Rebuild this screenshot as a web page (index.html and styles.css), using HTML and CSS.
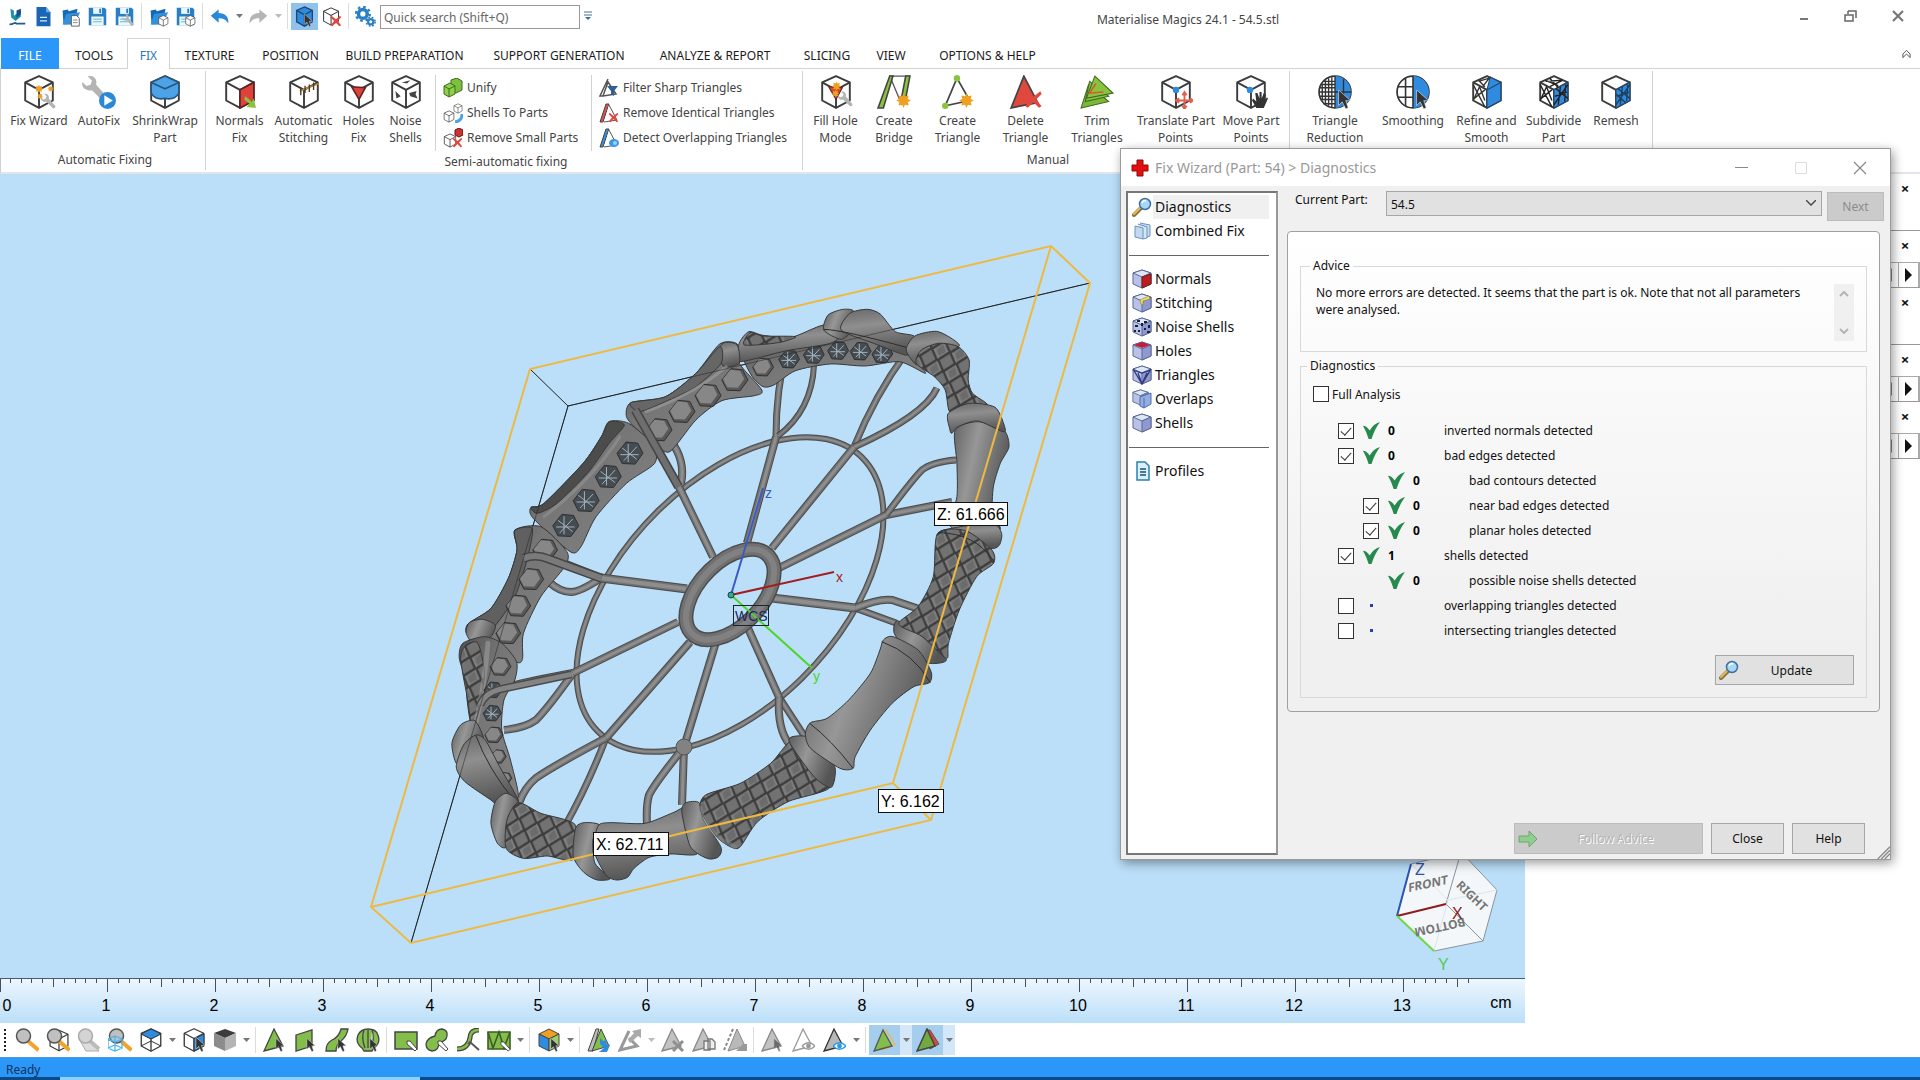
FILE: index.html
```html
<!DOCTYPE html>
<html lang="en">
<head>
    <meta charset="UTF-8">
    <meta name="viewport" content="width=device-width, initial-scale=1.0">
    <title>Materialise Magics 24.1 - 54.5.stl</title>
    <link rel="stylesheet" href="styles.css">
</head>
<body>
    <!-- Shared icon shapes -->
    <svg class="defs" aria-hidden="true">
        <symbol id="cube" viewBox="0 0 32 32">
            <path d="M16 1 29 7V24L16 31 3 24V7Z" fill="#fff" stroke="#3c3c3c" stroke-width="1.8" stroke-linejoin="round"/>
            <path d="M3 7 16 14 29 7M16 14V31" fill="none" stroke="#3c3c3c" stroke-width="1.8"/>
        </symbol>
        <symbol id="cursor" viewBox="0 0 12 16">
            <path d="M1 0V13L4 10 7 16 9 15 7 9H11Z" fill="#333" stroke="#eee" stroke-width=".5"/>
        </symbol>
        <symbol id="cross" viewBox="0 0 14 14">
            <path d="M2 1 7 5 12 1 13 3 9 7 13 12 11 13 7 9 3 13 1 12 5 7 1 3Z" fill="#e0483e"/>
        </symbol>
        <symbol id="wrench" viewBox="0 0 20 20">
            <path d="M1 5 4 8 7 7 8 4 5 1C9 0 12 3 11 7L19 16C20 18 18 20 16 19L8 11C4 12 0 9 1 5Z" fill="#b4b4b4"/>
        </symbol>
        <symbol id="star" viewBox="0 0 16 16">
            <path d="M8 0 9.500 3.500 13.500 2.500 12.500 6.500 16 8 12.500 9.500 13.500 13.500 9.500 12.500 8 16 6.500 12.500 2.500 13.500 3.500 9.500 0 8 3.500 6.500 2.500 2.500 6.500 3.500Z" fill="#f0a020"/>
        </symbol>
        <symbol id="floppy" viewBox="0 0 24 24">
            <path d="M2 2H20L22 4V22H2Z" fill="#2a7fc4"/>
            <path d="M7 2H17V9H7Z" fill="#e9f6fb"/><path d="M14 3H16V8H14Z" fill="#2a7fc4"/>
            <path d="M5 12H19V22H5Z" fill="#e9f9f8"/><path d="M7 15H17M7 18H17" stroke="#66a8c8"/>
        </symbol>
        <symbol id="folder" viewBox="0 0 24 24">
            <path d="M3 5 9 4 10 6 20 3 19 9 15 21H4Z" fill="#1769b5"/>
            <path d="M3 21 7 9 23 7 17 20Z" fill="#3391dc"/>
        </symbol>
        <symbol id="lens" viewBox="0 0 24 24">
            <path d="M13 13 22 21" stroke="#f2a32c" stroke-width="4" stroke-linecap="square"/>
            <circle cx="8.500" cy="8" r="7" fill="#c0c0c0" stroke="#555" stroke-width="1.500"/>
        </symbol>
        <symbol id="pencil" viewBox="0 0 12 12">
            <path d="M1 1 4 1 11 9 9 11 1 4Z" fill="#fff" stroke="#444"/>
        </symbol>
        <symbol id="gtri" viewBox="0 0 24 24">
            <path d="M11 1 20 18 1 23Z" fill="#c2c2c2" stroke="#888" stroke-width="1.300"/>
        </symbol>
        <symbol id="eye" viewBox="0 0 14 8">
            <path d="M0 4Q7 -3 14 4 7 11 0 4Z" fill="#fff" stroke="currentColor" stroke-width="1.400"/><circle cx="7" cy="4" r="2.600" fill="currentColor"/>
        </symbol>
        <symbol id="box" viewBox="0 0 20 20">
            <path d="M10 1 19 4V15L10 19 1 15V4Z" fill="#b9c1e8" stroke="#5a6a94"/>
            <path d="M1 4 10 1 19 4 10 8Z" fill="#dce6f5" stroke="#5a6a94"/>
            <path d="M10 8V19L19 15V4Z" fill="#9098d0" stroke="#5a6a94"/>
        </symbol>
        <symbol id="magnifier" viewBox="0 0 20 20">
            <path d="M2 18 9 11" stroke="#8a7440" stroke-width="4" stroke-linecap="round"/>
            <path d="M2 17 8 11" stroke="#e6b85c" stroke-width="2" stroke-linecap="round"/>
            <circle cx="13" cy="7" r="5.500" fill="#a9d8f4" stroke="#3e6fa3" stroke-width="1.500"/>
            <path d="M10 6Q11 3 14 4" stroke="#fff" stroke-width="1.500" fill="none"/>
        </symbol>
        <symbol id="tick" viewBox="0 0 18 18">
            <path d="M0 4Q4 4 7 9 11 2 18 0 12 8 9 18L6 18Q4 11 0 4Z" fill="#27894e"/>
        </symbol>
        <symbol id="caret" viewBox="0 0 8 5"><path d="M0 0H7L3.500 4Z" fill="currentColor"/></symbol>
    </svg>

    <header class="titlebar">
        <div class="quick">
            <button aria-label="Magics"><svg viewBox="0 0 24 24"><path d="M5 3 9 5V11L17 5V12L11 17 6 13Z" fill="#1b8fae"/><path d="M12 5 17 3V9L12 14Z" fill="#164f8c"/><path d="M4 21C10 21 9 18 12 20H22" stroke="#245b8c" stroke-width="2" fill="none"/></svg></button>
            <button aria-label="New"><svg viewBox="0 0 24 24"><path d="M4 1H15L20 7V23H4Z" fill="#1b66b4"/><path d="M15 1V7H20" fill="#6db2ea"/><path d="M8 13H16M8 17H16" stroke="#d8ecfa" stroke-width="1.500"/></svg></button>
            <button aria-label="Open"><svg viewBox="0 0 24 24"><use href="#folder"/><path d="M13 11H19L22 14V23H13Z" fill="#fff" stroke="#555"/><path d="M15 16H20M15 19H20" stroke="#777"/></svg></button>
            <button aria-label="Save"><svg viewBox="0 0 24 24"><use href="#floppy"/></svg></button>
            <button aria-label="Save as"><svg viewBox="0 0 24 24"><use href="#floppy"/><use href="#wrench" x="9" y="9" width="14" height="14"/></svg></button>
            <i class="sep"></i>
            <button aria-label="Import part"><svg viewBox="0 0 24 24"><use href="#folder"/><use href="#cube" x="11" y="10" width="13" height="14"/></svg></button>
            <button aria-label="Save part"><svg viewBox="0 0 24 24"><use href="#floppy"/><use href="#cube" x="11" y="10" width="13" height="14"/></svg></button>
            <i class="sep"></i>
            <button aria-label="Undo"><svg viewBox="0 0 24 24"><path d="M2 11 11 4V8C18 8 23 12 22 20 19 15 16 14 11 14V19Z" fill="#2a88d8"/></svg></button>
            <svg class="caret"><use href="#caret"/></svg>
            <button aria-label="Redo"><svg viewBox="0 0 24 24"><path d="M22 11 13 4V8C6 8 1 12 2 20 5 15 8 14 13 14V19Z" fill="#b5b5b5"/></svg></button>
            <svg class="caret off"><use href="#caret"/></svg>
            <i class="sep"></i>
            <button class="on" aria-label="Select"><svg viewBox="0 0 24 24"><path d="M12 1 21 5V18L12 23 3 18V5Z" fill="#2f8be0" stroke="#22486c" stroke-width="1.500"/><path d="M3 5 12 10 21 5M12 10V23" fill="none" stroke="#22486c" stroke-width="1.500"/><use href="#cursor" x="11" y="9" width="11" height="15"/></svg></button>
            <button aria-label="Unselect"><svg viewBox="0 0 24 24"><use href="#cube" x="1" y="1" width="21" height="22"/><use href="#cross" x="10" y="10" width="14" height="14"/></svg></button>
            <i class="sep"></i>
            <button aria-label="Settings"><svg viewBox="0 0 24 24"><circle cx="9" cy="9" r="5" fill="none" stroke="#2a7fc4" stroke-width="4"/><circle cx="9" cy="9" r="8" fill="none" stroke="#2a7fc4" stroke-width="2.500" stroke-dasharray="3 3.300"/><circle cx="18" cy="18" r="3" fill="none" stroke="#2a7fc4" stroke-width="2.500"/><circle cx="18" cy="18" r="5" fill="none" stroke="#2a7fc4" stroke-width="1.800" stroke-dasharray="2 2"/></svg></button>
            <input class="search" type="text" aria-label="Quick search" placeholder="Quick search (Shift+Q)">
            <svg class="more" viewBox="0 0 8 10"><path d="M0 1H8M0 4H8" stroke="#4a7090"/><path d="M1 6H7L4 9Z" fill="#2a6fa4"/></svg>
        </div>
        <h1>Materialise Magics 24.1 - 54.5.stl</h1>
        <div class="wincontrols">
            <button aria-label="Minimize"><svg viewBox="0 0 16 16"><path d="M4 11H12" stroke="#777" stroke-width="2"/></svg></button>
            <button aria-label="Restore"><svg viewBox="0 0 16 16"><path d="M5 3H13V10M2 7H10V13H2Z M5 6V3" fill="none" stroke="#666" stroke-width="1.500"/></svg></button>
            <button aria-label="Close"><svg viewBox="0 0 16 16"><path d="M3 3 13 13M13 3 3 13" stroke="#777" stroke-width="2.200"/></svg></button>
        </div>
    </header>

    <nav class="tabs">
        <button class="file">FILE</button>
        <button>TOOLS</button>
        <button class="active">FIX</button>
        <button>TEXTURE</button>
        <button>POSITION</button>
        <button>BUILD PREPARATION</button>
        <button>SUPPORT GENERATION</button>
        <button>ANALYZE &amp; REPORT</button>
        <button>SLICING</button>
        <button>VIEW</button>
        <button>OPTIONS &amp; HELP</button>
        <svg class="collapse" viewBox="0 0 10 10"><path d="M1 5 5 1 9 5M1 9 5 5 9 9M1 5V9M9 5V9" fill="none" stroke="#444"/></svg>
    </nav>

    <section class="ribbon">
        <div class="group">
            <div class="tools auto">
                <button class="tool"><svg viewBox="0 0 32 32"><use href="#cube"/><use href="#star" x="12" y="9" width="8" height="8"/><use href="#star" x="24" y="10" width="6" height="6"/><use href="#star" x="14" y="17" width="6" height="6"/><use href="#wrench" x="17" y="17" width="15" height="15"/></svg>Fix Wizard</button>
                <button class="tool"><svg viewBox="0 0 32 32"><use href="#wrench" x="-1" y="0" width="26" height="26"/><circle cx="24" cy="24" r="8" fill="#2a88d8"/><path d="M21 19 29 24 21 29Z" fill="#fff"/></svg>AutoFix</button>
                <button class="tool"><svg viewBox="0 0 32 32"><use href="#cube"/><path d="M16 1 29 7V17Q25 24 16 22 7 24 3 17V7Z" fill="#4da3e8" stroke="#27577d" stroke-width="1.500"/><path d="M3 7 16 13 29 7" fill="none" stroke="#27577d" stroke-width="1.500"/></svg>ShrinkWrap<br>Part</button>
            </div>
            <span class="name">Automatic Fixing</span>
        </div>
        <div class="group">
            <div class="row">
                <div class="tools semi">
                    <button class="tool"><svg viewBox="0 0 32 32"><use href="#cube"/><path d="M16 14 29 7V24L16 31Z" fill="#e0423a" stroke="#5c2522" stroke-width="1.500"/><path d="M21 20 27 25 29 22 31 31 22 30 25 27 20 23Z" fill="#8ac43f"/></svg>Normals<br>Fix</button>
                    <button class="tool"><svg viewBox="0 0 32 32"><use href="#cube"/><path d="M12 15 30 8" stroke="#b98a3a" stroke-width="1.500"/><path d="M13 12V19M17 10V17M21 9V16M25 7V14" stroke="#4e3c20" stroke-width="1.300"/></svg>Automatic<br>Stitching</button>
                    <button class="tool"><svg viewBox="0 0 32 32"><use href="#cube"/><path d="M9 11 22 12 16 23Z" fill="#e0423a" stroke="#5c2522" stroke-width="1.500"/></svg>Holes<br>Fix</button>
                    <button class="tool"><svg viewBox="0 0 32 32"><use href="#cube"/><path d="M12 7 20 5 17 8Z M6 15 11 20 7 22Z M19 17 26 15 25 18 27 22 20 20Z" fill="#444"/></svg>Noise<br>Shells</button>
                </div>
                <div class="stack first">
                    <button><svg viewBox="0 0 20 20"><path d="M8 2 14 0 19 3V12L13 15 8 12Z" fill="#7cc040" stroke="#3f6a20"/><path d="M1 8 7 5 12 8V16L6 19 1 16Z" fill="#8ed04a" stroke="#3f6a20"/><path d="M1 8 6 11 12 8M6 11V19" fill="none" stroke="#3f6a20"/></svg>Unify</button>
                    <button><svg viewBox="0 0 20 20"><use href="#cube" x="10" y="0" width="10" height="11"/><use href="#cube" x="0" y="7" width="12" height="13"/><path d="M19 11Q19 18 12 19" stroke="#4da3e8" stroke-width="3" fill="none"/></svg>Shells To Parts</button>
                    <button><svg viewBox="0 0 20 20"><use href="#cube" x="0" y="5" width="14" height="15"/><path d="M12 2 16 0 20 2V7L16 9 12 7Z" fill="#c33" stroke="#611"/><use href="#cross" x="9" y="9" width="11" height="11"/></svg>Remove Small Parts</button>
                </div>
                <div class="stack">
                    <button><svg viewBox="0 0 20 20"><path d="M9 1 1 18 4 18 9 4 17 16 4 18" fill="none" stroke="#555" stroke-width="1.500"/><path d="M8 8H19L15 13V18L12 16V13Z" fill="#2d5f94"/></svg>Filter Sharp Triangles</button>
                    <button><svg viewBox="0 0 20 20"><path d="M7 1 10 1 4 19 1 19Z" fill="#d9534a" stroke="#444"/><path d="M10 2 18 17 5 19" fill="#fff" stroke="#555"/><use href="#cross" x="9" y="9" width="11" height="11"/></svg>Remove Identical Triangles</button>
                    <button><svg viewBox="0 0 20 20"><path d="M7 1 10 1 4 19 1 19Z" fill="#3a8fd0" stroke="#444"/><path d="M10 2 18 17 5 19" fill="#fff" stroke="#555"/><ellipse cx="15" cy="15" rx="5" ry="4" fill="#3b98e6"/><circle cx="16" cy="15" r="2" fill="#9fd0f8"/></svg>Detect Overlapping Triangles</button>
                </div>
            </div>
            <span class="name">Semi-automatic fixing</span>
        </div>
        <div class="group">
            <div class="tools manual">
                <button class="tool"><svg viewBox="0 0 32 32"><use href="#cube"/><path d="M9 11 22 12 16 23Z" fill="#d44a2e" stroke="#5c2522"/><use href="#star" x="12" y="6" width="9" height="9"/><use href="#star" x="12" y="14" width="7" height="7"/><use href="#wrench" x="17" y="15" width="15" height="15"/></svg>Fill Hole<br>Mode</button>
                <button class="tool"><svg viewBox="0 0 32 32"><path d="M12 1H30L23 27Z" fill="#fff" stroke="#555" stroke-width="1.200"/><path d="M12 1H15L6 31H1Z M27 1H31L27 22H23Z" fill="#8ac43f" stroke="#444" stroke-width="1.500"/><use href="#star" x="18" y="17" width="14" height="14"/></svg>Create<br>Bridge</button>
                <button class="tool"><svg viewBox="0 0 32 32"><path d="M15 3 27 24 4 29Z" fill="#fff" stroke="#444" stroke-width="1.600"/><circle cx="15" cy="3" r="3" fill="#8ac43f"/><circle cx="4" cy="29" r="3" fill="#8ac43f"/><use href="#star" x="17" y="17" width="14" height="14"/></svg>Create<br>Triangle</button>
                <button class="tool"><svg viewBox="0 0 32 32"><path d="M14 1 27 26 2 31Z" fill="#e0483e" stroke="#444" stroke-width="1.600"/><use href="#cross" x="14" y="14" width="18" height="18"/></svg>Delete<br>Triangle</button>
                <button class="tool"><svg viewBox="0 0 32 32"><path d="M8 9 27 25 1 31Z" fill="#7ab838" stroke="#3f6a20"/><path d="M9 6 27 20 5 25Z" fill="#8ac43f" stroke="#3f6a20"/><path d="M14 1 31 17 6 22Z" fill="#8ac43f" stroke="#3f6a20"/><path d="M15 8 9 17 22 16" fill="none" stroke="#d06030" stroke-width="1.500"/></svg>Trim<br>Triangles</button>
                <button class="tool"><svg viewBox="0 0 32 32"><use href="#cube"/><circle cx="16" cy="14" r="3" fill="#2f8be0"/><path d="M24 17V31M17 24H31M22 19 24 16 26 19M22 29 24 32 26 29M19 22 16 24 19 26M29 22 32 24 29 26" fill="none" stroke="#e0604e" stroke-width="1.800"/></svg>Translate Part<br>Points</button>
                <button class="tool"><svg viewBox="0 0 32 32"><use href="#cube"/><circle cx="15" cy="14" r="3" fill="#2f8be0"/><path d="M21 31 17 24 18 22 21 25 20 17 22 17 24 22 24 16 26 16 26 22 28 17 30 18 29 24 31 21 32 22 28 31Z" fill="#333"/></svg>Move Part<br>Points</button>
            </div>
            <span class="name">Manual</span>
        </div>
        <div class="group">
            <div class="tools mesh">
                <button class="tool"><svg viewBox="0 0 32 32"><circle cx="16" cy="16" r="15" fill="#fff" stroke="#333" stroke-width="1.600"/><path d="M16 1A15 15 0 0 1 16 31Z" fill="#2f8be0"/><path d="M4 8V24M7 5V27M10 3V29M13 2V30M16 1V31M24 4V28M5 6H16M3 9H16M2 12H16M1 16H31M2 20H16M3 23H16M5 27H16" stroke="#333" stroke-width="1.300"/><use href="#cursor" x="18" y="14" width="14" height="18"/></svg>Triangle<br>Reduction</button>
                <button class="tool"><svg viewBox="0 0 32 32"><circle cx="16" cy="16" r="15" fill="#fff" stroke="#333" stroke-width="1.600"/><path d="M16 1A15 15 0 0 1 16 31Z" fill="#2f8be0"/><path d="M9 3V29M16 1V31M2 11H16M2 21H16" stroke="#333" stroke-width="1.500"/><use href="#cursor" x="18" y="14" width="14" height="18"/></svg>Smoothing</button>
                <button class="tool"><svg viewBox="0 0 32 32"><use href="#cube"/><path d="M16 14 29 7V24L16 31Z M16 14 19 2 29 7Z" fill="#2f8be0" stroke="#22486c"/><path d="M3 9 14 30M4 22 14 14M3 24 9 11 14 24M8 6 18 3 12 11M8 5 14 11" fill="none" stroke="#333" stroke-width="1.300"/></svg>Refine and<br>Smooth</button>
                <button class="tool"><svg viewBox="0 0 32 32"><use href="#cube"/><path d="M16 14 29 7V24L16 31Z" fill="#2f8be0" stroke="#22486c"/><path d="M3 9 14 30M4 22 14 14M3 24 9 11 14 24M8 6 24 5 12 11M8 5 20 10M16 28 29 9M18 13 29 22M17 20 28 16M22 11 20 28M27 9 26 25M12 3 20 12" fill="none" stroke="#222" stroke-width="1.300"/></svg>Subdivide<br>Part</button>
                <button class="tool"><svg viewBox="0 0 32 32"><use href="#cube"/><path d="M16 14 29 7V24L16 31Z" fill="#2f8be0" stroke="#22486c"/><path d="M16 28 29 9M18 13 29 22M17 20 28 16M22 11 20 28M27 9 26 25M16 18 25 26" fill="none" stroke="#1d3f60" stroke-width="1.300"/></svg>Remesh</button>
            </div>
        </div>
    </section>

    <main class="work">
        <div class="viewport">
            <svg class="scene" viewBox="0 174 1525 804" preserveAspectRatio="xMinYMin slice">
                <defs>
                    <linearGradient id="bone" x1="0" y1="0" x2="1" y2=".4"><stop offset="0" stop-color="#5c5c5c"/><stop offset=".45" stop-color="#979797"/><stop offset="1" stop-color="#555"/></linearGradient>
                    <linearGradient id="boneV" x1="0" y1="0" x2=".2" y2="1"><stop offset="0" stop-color="#686868"/><stop offset=".4" stop-color="#8f8f8f"/><stop offset="1" stop-color="#565656"/></linearGradient>
                    <linearGradient id="band" x1="0" y1="0" x2="1" y2="1"><stop offset="0" stop-color="#505050"/><stop offset=".4" stop-color="#767676"/><stop offset="1" stop-color="#828282"/></linearGradient>
                    <pattern id="lattice" width="44" height="58" patternUnits="userSpaceOnUse" patternTransform="rotate(16)">
                        <rect width="44" height="58" fill="#3c3c3c"/>
                        <path d="M22 4 39 29 22 54 5 29Z" fill="#7c7c7c"/>
                        <path d="M22 9 34 29 22 46 12 29Z" fill="#6b6b6b"/>
                        <path d="M22 4 39 29M5 29 22 54" stroke="#9c9c9c" stroke-width="2"/>
                        <path d="M0 -25 17 0 0 25ZM44 -25 27 0 44 25ZM0 33 17 58 0 83ZM44 33 27 58 44 83Z" fill="#727272"/>
                    </pattern>
                </defs>

                <!-- far edges of the bounding box -->
                <path class="edge" d="M530 369 568 406 1090 283M568 406 411 943"/>

                <!-- hub, middle ring and spokes; the ring is a circle in the part's XZ plane -->
                <g transform="matrix(8.330 -1.968 -2.578 8.720 730 594.500)" fill="none">
                    <circle class="ring dark" r="17.600"/><circle class="ring mid" r="17.600"/><circle class="ring glint" r="17.600"/>
                </g>
                <g id="spokes"></g>
                <g transform="matrix(8.330 -1.968 -2.578 8.720 730 594.500)" fill="none">
                    <circle class="hub dark" r="5.050"/><circle class="hub mid" r="5.050"/><circle class="hub light" r="5.050"/>
                </g>
                <g id="rimTop" transform="matrix(.43367 0 0 .33333 440 230)"></g>
                <g id="rimBottom" transform="matrix(.43367 0 0 .33333 350 500)"></g>

                <path class="edge faint" d="M568 406 1090 283M568 406 411 943"/>
                <path class="frame" d="M371 907 530 369 1051 246 1090 283 931 820 411 943ZL893 783 931 820M893 783 1051 246"/>

                <!-- axes -->
                <path d="M731 595 763 488" stroke="#3a5cc0" stroke-width="2"/>
                <path d="M731 595 834 572" stroke="#a31c20" stroke-width="2"/>
                <path d="M731 595 812 668" stroke="#4fd32a" stroke-width="2"/>
                <circle cx="731" cy="595" r="3" fill="#3a9" stroke="#143"/>
                <text class="axis" x="765" y="498" fill="#3a5cc0">z</text>
                <text class="axis" x="836" y="582" fill="#a31c20">x</text>
                <text class="axis" x="813" y="681" fill="#4fd32a">y</text>
                <rect x="733.500" y="605.500" width="35" height="20" fill="none" stroke="#1c2430"/>
                <text class="wcs" x="735" y="621">WCS</text>

                <g class="dims">
                    <rect x="593.500" y="832.500" width="75" height="23"/><text x="596" y="850">X: 62.711</text>
                    <rect x="878.500" y="789.500" width="65" height="23"/><text x="881" y="807">Y: 6.162</text>
                    <rect x="934.500" y="502.500" width="73" height="23"/><text x="937" y="520">Z: 61.666</text>
                </g>

                <!-- navigation cube -->
                <path d="M1397 916 1411 864 1461 852 1497 890 1483 941 1434 951Z" fill="#f4f7fa" stroke="#8a94a0"/>
                <path d="M1461 852 1446 904 1483 941" fill="none" stroke="#8a94a0"/>
                <path d="M1411 864 1448 900 1497 890M1448 900 1434 951" fill="none" stroke="#dde3ea"/>
                <path d="M1397 916 1411 864" stroke="#2c55b0" stroke-width="2"/>
                <path d="M1397 916 1446 904" stroke="#8c1c1c" stroke-width="2"/>
                <path d="M1397 916 1434 951" stroke="#6fd84a" stroke-width="2"/>
                <g class="face">
                    <text transform="translate(1428 888) rotate(-12) skewX(-12)">FRONT</text>
                    <text transform="translate(1469 899) rotate(44)">RIGHT</text>
                    <text transform="translate(1439 923) rotate(168)">BOTTOM</text>
                </g>
                <text class="nav-axis" x="1415" y="875" fill="#2c55b0">Z</text>
                <text class="nav-axis" x="1452" y="919" fill="#8c1c1c">X</text>
                <text class="nav-axis" x="1438" y="970" fill="#55c955">Y</text>
            </svg>
            <svg class="ruler" id="ruler" height="45"></svg>
        </div>

        <aside class="dock">
            <div class="pane"><button class="x" aria-label="Close pane">×</button></div>
            <div class="pane"><button class="x" aria-label="Close pane">×</button><div class="scroll"><i class="left"></i><i class="right"></i></div></div>
            <div class="pane"><button class="x" aria-label="Close pane">×</button></div>
            <div class="pane"><button class="x" aria-label="Close pane">×</button><div class="scroll"><i class="left"></i><i class="right"></i></div></div>
            <div class="pane"><button class="x" aria-label="Close pane">×</button><div class="scroll"><i class="left"></i><i class="right"></i></div></div>
        </aside>
    </main>

    <footer class="toolbar">
        <i class="grip"></i>
        <button aria-label="Zoom"><svg viewBox="0 0 24 24"><use href="#lens"/></svg></button>
        <button aria-label="Zoom to part"><svg viewBox="0 0 24 24"><use href="#cube" x="2" y="1" width="22" height="23"/><use href="#lens"/></svg></button>
        <button aria-label="Zoom previous"><svg viewBox="0 0 24 24"><path d="M2 11 9 23H22L13 12" fill="#ddd" stroke="#aaa"/><path d="M13 13 22 21" stroke="#bbb" stroke-width="4"/><circle cx="8.500" cy="8" r="7" fill="#d4d4d4" stroke="#aaa" stroke-width="1.500"/></svg></button>
        <button aria-label="Zoom platform"><svg viewBox="0 0 24 24"><use href="#lens"/><path d="M7 8 14 11V20L7 23 0 20V11ZM0 11 7 14 14 11M7 14V23M0 20 7 17 14 20M7 8V17" fill="none" stroke="#4bb5f0" stroke-width="1.300"/></svg></button>
        <button aria-label="Views"><svg viewBox="0 0 24 24"><use href="#cube"/><path d="M2 6 12 1 22 6 12 11Z" fill="#2f8be0" stroke="#333"/><path d="M2 18 12 13 22 18" fill="none" stroke="#333"/></svg></button>
        <svg class="caret"><use href="#caret"/></svg>
        <button aria-label="Pick view"><svg viewBox="0 0 24 24"><use href="#cube"/><path d="M12 11 22 6V18L12 23Z" fill="#2f8be0" stroke="#333"/><use href="#cursor" x="13" y="9" width="11" height="15"/></svg></button>
        <button aria-label="Shading"><svg viewBox="0 0 24 24"><path d="M1 5 12 1 23 5 12 10Z" fill="#3c3c3c"/><path d="M1 5 12 10V23L1 18Z" fill="#8c8c8c"/><path d="M23 5 12 10V23L23 18Z" fill="#b4b4b4"/></svg></button>
        <svg class="caret"><use href="#caret"/></svg>
        <i class="sep"></i>
        <button aria-label="Mark triangle"><svg viewBox="0 0 24 24"><path d="M11 1 20 18 1 23Z" fill="#84be4a" stroke="#444" stroke-width="1.300"/><use href="#cursor" x="12" y="10" width="10" height="14"/></svg></button>
        <button aria-label="Mark plane"><svg viewBox="0 0 24 24"><path d="M2 7 18 2V18L2 23Z" fill="#84be4a" stroke="#444" stroke-width="1.300"/><use href="#cursor" x="12" y="10" width="10" height="14"/></svg></button>
        <button aria-label="Mark surface"><svg viewBox="0 0 24 24"><path d="M16 1H23Q22 8 16 13 11 17 11 23H1Q1 15 7 12 14 9 16 1Z" fill="#84be4a" stroke="#444" stroke-width="1.300"/><use href="#cursor" x="12" y="10" width="10" height="14"/></svg></button>
        <button aria-label="Mark shell"><svg viewBox="0 0 24 24"><path d="M6 20Q-1 15 2 7 5 1 12 1 20 1 22 7 25 15 18 20L16 23H8ZM9 20Q5 10 8 2M12 20V2M15 20Q19 10 16 2" fill="#84be4a" stroke="#444" stroke-width="1.300"/><use href="#cursor" x="13" y="10" width="10" height="14"/></svg></button>
        <i class="sep"></i>
        <button aria-label="Window mark"><svg viewBox="0 0 24 24"><path d="M1 4H23V21H1Z" fill="#84be4a" stroke="#444" stroke-width="1.500"/><use href="#pencil" x="12" y="12" width="12" height="12"/></svg></button>
        <button aria-label="Brush mark"><svg viewBox="0 0 24 24"><path d="M10 8Q11 1 17 1 23 2 22 8 21 14 14 14 14 23 7 23 1 22 1 16 2 10 10 8Z" fill="#84be4a" stroke="#444" stroke-width="1.300"/><use href="#pencil" x="12" y="12" width="12" height="12"/></svg></button>
        <button aria-label="Curve mark"><svg viewBox="0 0 24 24"><path d="M23 2Q14 2 14 10 12 21 1 21" fill="none" stroke="#444" stroke-width="5"/><path d="M23 2Q14 2 14 10 12 21 1 21" fill="none" stroke="#84be4a" stroke-width="2.500"/><path d="M12 16 14 14 23 22" stroke="#555" stroke-width="2" fill="none"/></svg></button>
        <button aria-label="Mark in window"><svg viewBox="0 0 24 24"><path d="M1 4H23V21H1Z" fill="#84be4a" stroke="#3d5c26" stroke-width="1.600"/><path d="M1 4 6 20 12 4 17 20 23 4" fill="none" stroke="#3d5c26" stroke-width="1.600"/><use href="#pencil" x="13" y="13" width="11" height="11"/></svg></button>
        <svg class="caret"><use href="#caret"/></svg>
        <i class="sep"></i>
        <button aria-label="Color cube"><svg viewBox="0 0 24 24"><path d="M2 6 12 1 22 6 12 11Z" fill="#f0a020" stroke="#444"/><path d="M2 6 12 11V23L2 18Z" fill="#2f8be0" stroke="#444"/><path d="M22 6 12 11V23L22 18Z" fill="#9ccf6c" stroke="#444"/><use href="#cursor" x="13" y="10" width="10" height="14"/></svg></button>
        <svg class="caret"><use href="#caret"/></svg>
        <i class="sep"></i>
        <button aria-label="Invert marks"><svg viewBox="0 0 24 24"><path d="M9 1H12L6 23H1Z" fill="#bbb" stroke="#444"/><path d="M14 1 22 18 5 23Z" fill="#84be4a" stroke="#444"/><path d="M13 16V10L16 13 20 12 19 16 23 17 20 24 12 24 17 20Z" fill="#2f8be0"/></svg></button>
        <button aria-label="Expand marks"><svg viewBox="0 0 24 24"><path d="M11 3 2 22 19 18 11 10" fill="none" stroke="#999" stroke-width="3"/><path d="M10 12 16 5 14 3 23 1V10L20 8 12 15Z" fill="#aaa"/></svg></button>
        <svg class="caret off"><use href="#caret"/></svg>
        <button aria-label="Delete marked"><svg viewBox="0 0 24 24"><use href="#gtri"/><path d="M12 13 22 23M22 13 12 23" stroke="#909090" stroke-width="3"/></svg></button>
        <button aria-label="Copy marked"><svg viewBox="0 0 24 24"><use href="#gtri"/><path d="M12 13H18V22H12Z M16 11H20L23 14V21H16Z" fill="#eee" stroke="#777" stroke-width="1.300"/></svg></button>
        <button aria-label="Separate marked"><svg viewBox="0 0 24 24"><path d="M10 1 1 22" stroke="#888" stroke-width="2" stroke-dasharray="3 2"/><path d="M14 1 22 18 5 23Z" fill="#b9b9b9" stroke="#888"/><path d="M13 23 20 16H24V23Z" fill="#999"/></svg></button>
        <i class="sep"></i>
        <button aria-label="Pick marked"><svg viewBox="0 0 24 24"><use href="#gtri"/><g opacity=".6"><use href="#cursor" x="12" y="10" width="10" height="14"/></g></svg></button>
        <button aria-label="Hide marked"><svg class="grey" viewBox="0 0 24 24"><path d="M11 1 20 18 1 23Z" fill="#fff" stroke="#999" stroke-width="1.300"/><use href="#eye" x="10" y="14" width="13" height="8"/></svg></button>
        <button aria-label="Show marked"><svg class="blue" viewBox="0 0 24 24"><path d="M11 1 20 18 1 23Z" fill="#b8b8b8" stroke="#333" stroke-width="1.300"/><use href="#eye" x="10" y="14" width="13" height="8"/></svg></button>
        <svg class="caret"><use href="#caret"/></svg>
        <i class="sep"></i>
        <button class="on" aria-label="Front faces"><svg viewBox="0 0 24 24"><path d="M12 1 22 17 9 22" fill="none" stroke="#e3bb60" stroke-width="1.500"/><path d="M10 2 19 18 1 23Z" fill="#84be4a" stroke="#555" stroke-width="1.300"/></svg></button>
        <span class="lit"><svg class="caret"><use href="#caret"/></svg></span>
        <button class="on" aria-label="Back faces"><svg viewBox="0 0 24 24"><path d="M14 2 23 16 14 21 10 2Z" fill="#dc4640" stroke="#555"/><path d="M11 1 19 18 1 23Z" fill="#74a840" stroke="#444" stroke-width="1.500"/></svg></button>
        <span class="lit"><svg class="caret"><use href="#caret"/></svg></span>
    </footer>
    <div class="status">Ready</div>
    <div class="taskbar"><i></i></div>

    <div class="dialog" role="dialog" aria-label="Fix Wizard">
        <div class="dlg-title">
            <svg viewBox="0 0 18 18"><path d="M6 1H12V6H17V12H12V17H6V12H1V6H6Z" fill="#e01010" stroke="#8c0d0d"/></svg>
            <h2>Fix Wizard (Part: 54) &gt; Diagnostics</h2>
            <div class="dlg-controls">
                <button aria-label="Minimize"><svg viewBox="0 0 14 14"><path d="M0 6.500H13" stroke="#888"/></svg></button>
                <button aria-label="Maximize" disabled><svg viewBox="0 0 14 14"><path d="M1.500 1.500H12.500V12.500H1.500Z" fill="none" stroke="#ddd"/></svg></button>
                <button aria-label="Close"><svg viewBox="0 0 14 14"><path d="M1 1 13 13M13 1 1 13" stroke="#888" stroke-width="1.200"/></svg></button>
            </div>
        </div>
        <div class="dlg-body">
            <ul class="pages">
                <li class="current"><svg viewBox="0 0 20 20"><use href="#magnifier"/></svg><span>Diagnostics</span></li>
                <li><svg viewBox="0 0 20 20"><path d="M8 2 18 4V15L13 17" fill="#c4dcf0" stroke="#6a94bc"/><path d="M6 3 15 6V17L11 18" fill="#d3e7f6" stroke="#6a94bc"/><path d="M3 5 11 7V18L3 16Z" fill="#c2d9f0" stroke="#6a94bc"/></svg><span>Combined Fix</span></li>
                <li class="line"></li>
                <li><svg viewBox="0 0 20 20"><use href="#box"/><path d="M10 8V19L19 15V5Z" fill="#c01c1c" stroke="#6c2020"/></svg><span>Normals</span></li>
                <li><svg viewBox="0 0 20 20"><use href="#box"/><path d="M8 7 17 3 18 6 11 8V12L9 11Z" fill="#f0e060" stroke="#8a7a20" stroke-width=".6"/></svg><span>Stitching</span></li>
                <li><svg viewBox="0 0 20 20"><use href="#box"/><path d="M5 3H8V5H5ZM12 4H15V6H12ZM3 8H6V10H3ZM6 13H8V15H6ZM12 11H14V13H12ZM16 8H18V11H16ZM15 14H18V16H15ZM2 13H4V15H2ZM9 6H11V9H9Z" fill="#16203c"/></svg><span>Noise Shells</span></li>
                <li><svg viewBox="0 0 20 20"><use href="#box"/><path d="M2 4 10 1 18 4 10 7Z" fill="#c01c3c"/></svg><span>Holes</span></li>
                <li><svg viewBox="0 0 20 20"><use href="#box"/><path d="M1 4 10 19 19 4M6 8 10 19 15 8M1 5 10 8 19 5" fill="none" stroke="#303a80" stroke-width="1.300"/></svg><span>Triangles</span></li>
                <li><svg viewBox="0 0 20 20"><use href="#box" width="17" height="17"/><path d="M8 8 19 4V15L12 19 8 17Z" fill="#93aee2" stroke="#4f6ea8"/><path d="M12 9V19" stroke="#4f6ea8"/></svg><span>Overlaps</span></li>
                <li><svg viewBox="0 0 20 20"><use href="#box"/></svg><span>Shells</span></li>
                <li class="line"></li>
                <li><svg viewBox="0 0 20 20"><path d="M5 1H13L17 5V19H5Z" fill="#d9f1fb" stroke="#2d80a8" stroke-width="1.500"/><path d="M8 8H14M8 11H14M8 14H14" stroke="#1e4f74" stroke-width="1.300"/></svg><span>Profiles</span></li>
            </ul>
            <div class="content">
                <div class="part">
                    <label for="part">Current Part:</label>
                    <div class="select">
                        <select id="part"><option>54.5</option></select>
                        <svg viewBox="0 0 10 6"><path d="M0 0 5 5 10 0" fill="none" stroke="#444" stroke-width="1.300"/></svg>
                    </div>
                    <button class="btn next" disabled>Next</button>
                </div>
                <div class="sheet">
                    <fieldset class="advice">
                        <legend>Advice</legend>
                        <p>No more errors are detected. It seems that the part is ok. Note that not all parameters were analysed.</p>
                        <div class="vscroll">
                            <svg viewBox="0 0 10 6"><path d="M1 5 5 1 9 5" fill="none" stroke="#b4b4b4" stroke-width="2"/></svg>
                            <svg viewBox="0 0 10 6"><path d="M1 1 5 5 9 1" fill="none" stroke="#b4b4b4" stroke-width="2"/></svg>
                        </div>
                    </fieldset>
                    <fieldset class="diag">
                        <legend>Diagnostics</legend>
                        <label class="full"><input type="checkbox">Full Analysis</label>
                        <label class="check"><input type="checkbox" checked><svg><use href="#tick"/></svg><b>0</b>inverted normals detected</label>
                        <label class="check"><input type="checkbox" checked><svg><use href="#tick"/></svg><b>0</b>bad edges detected</label>
                        <div class="check sub"><i></i><svg><use href="#tick"/></svg><b>0</b>bad contours detected</div>
                        <label class="check sub"><input type="checkbox" checked><svg><use href="#tick"/></svg><b>0</b>near bad edges detected</label>
                        <label class="check sub"><input type="checkbox" checked><svg><use href="#tick"/></svg><b>0</b>planar holes detected</label>
                        <label class="check"><input type="checkbox" checked><svg><use href="#tick"/></svg><b>1</b>shells detected</label>
                        <div class="check sub"><i></i><svg><use href="#tick"/></svg><b>0</b>possible noise shells detected</div>
                        <label class="check"><input type="checkbox"><i class="dot"></i><b></b>overlapping triangles detected</label>
                        <label class="check"><input type="checkbox"><i class="dot"></i><b></b>intersecting triangles detected</label>
                        <button class="btn update"><svg viewBox="0 0 20 20"><use href="#magnifier"/></svg><span>Update</span></button>
                    </fieldset>
                </div>
                <div class="actions">
                    <button class="btn follow" disabled><svg viewBox="0 0 20 20"><path d="M1 7H11V2L19 10 11 18V13H1Z" fill="#8fce8f" stroke="#6aa86a"/></svg><span>Follow Advice</span></button>
                    <button class="btn">Close</button>
                    <button class="btn">Help</button>
                </div>
            </div>
        </div>
        <svg class="resize" viewBox="0 0 16 16"><path d="M2 16 16 2M6 16 16 6M10 16 16 10" stroke="#888" stroke-width="1.500"/></svg>
    </div>

    <script src="scene.js"></script>
</body>
</html>
```

FILE: styles.css
```css
* {
    box-sizing: border-box;
}
body {
    margin: 0;
    height: 100vh;
    display: flex;
    flex-direction: column;
    position: relative;
    overflow: hidden;
    background: #fff;
    color: #444;
    font-family: "Noto Sans", "Open Sans", sans-serif;
    font-size: 12px;
}
button {
    font: inherit;
    color: inherit;
    background: none;
    border: 0;
    padding: 0;
}
h1, h2, p, ul {
    margin: 0;
    padding: 0;
    font-weight: normal;
}
svg {
    display: block;
    flex: none;
}
.defs {
    position: absolute;
    width: 0;
    height: 0;
}

/* Title bar */
.titlebar {
    height: 38px;
    display: flex;
    flex: none;
}
.quick {
    width: 600px;
    height: 32px;
    padding-left: 3px;
    display: flex;
    align-items: center;
}
.quick button {
    width: 27px;
    height: 27px;
    display: flex;
    align-items: center;
    justify-content: center;
}
.quick button svg {
    width: 21px;
    height: 21px;
}
.quick .on {
    background: #90c2ee;
}
.sep {
    width: 1px;
    height: 26px;
    margin: 0 3px;
    background: #dcdcdc;
    flex: none;
}
.caret {
    width: 12px;
    height: 5px;
    padding-left: 2px;
    color: #777;
    overflow: visible;
}
.caret use {
    width: 8px;
    height: 5px;
}
.caret.off {
    color: #bbb;
}
.search {
    width: 200px;
    height: 24px;
    margin: 2px 4px 0 1px;
    padding: 0 3px;
    border: 1px solid #999;
    font: inherit;
}
.search::placeholder {
    color: #666;
}
.more {
    width: 8px;
    height: 10px;
}
.titlebar h1 {
    flex: 1;
    text-align: center;
    font-size: 12px;
    line-height: 40px;
}
.wincontrols {
    width: 144px;
    display: flex;
    justify-content: flex-end;
    gap: 31px;
    padding: 8px 14px 0 0;
    height: 24px;
}
.wincontrols svg {
    width: 16px;
    height: 16px;
}

/* Ribbon tabs */
.tabs {
    height: 31px;
    flex: none;
    display: grid;
    grid-template-columns: 60px 66px 43px 79px 83px 145px 164px 148px 76px 52px 141px 1fr;
    border-bottom: 1px solid #d2d2d2;
    padding-left: 1px;
    color: #1c1c1c;
}
.tabs button {
    padding-top: 3px;
}
.tabs .file {
    background: #2b97f8;
    color: #fff;
    width: 58px;
}
.tabs .active {
    border: 1px solid #d2d2d2;
    border-bottom: 0;
    background: #fff;
    color: #2878b8;
    height: 31px;
}
.collapse {
    width: 9px;
    height: 10px;
    justify-self: end;
    align-self: center;
    margin-right: 9px;
}

/* Ribbon */
.ribbon {
    height: 105px;
    flex: none;
    display: flex;
    border-bottom: 2px solid #e2e6ea;
    border-left: 1px solid #d2d2d2;
    padding-top: 2px;
}
.group {
    border-right: 1px solid #d2d2d2;
    margin-bottom: 2px;
    padding: 4px 1px 0;
    display: flex;
    flex-direction: column;
    justify-content: space-between;
}
.row {
    display: flex;
}
.tools {
    display: grid;
    line-height: 17px;
}
.auto {
    grid-template-columns: 66px 54px 78px;
    padding-left: 4px;
}
.semi {
    grid-template-columns: 65px 63px 47px 47px;
}
.manual {
    grid-template-columns: 63px 54px 73px 63px 80px 77px 74px;
}
.mesh {
    grid-template-columns: 88px 68px 79px 55px 70px;
}
.tool {
    display: block;
    text-align: center;
    white-space: nowrap;
    align-self: start;
}
.tool svg {
    width: 34px;
    height: 34px;
    margin: 0 auto 3px;
}
.stack {
    display: flex;
    flex-direction: column;
    border-left: 1px solid #d2d2d2;
    padding-left: 7px;
    width: 210px;
    height: 76px;
}
.stack.first {
    margin-left: 6px;
    width: 156px;
}
.stack button {
    height: 25px;
    flex: none;
    display: flex;
    align-items: center;
    gap: 4px;
    white-space: nowrap;
}
.stack svg {
    width: 20px;
    height: 20px;
}
.name {
    text-align: center;
    line-height: 21px;
    padding-left: 4px;
}

/* Work area */
.work {
    flex: 1;
    min-height: 0;
    display: flex;
}
.viewport {
    flex: 1;
    min-width: 0;
    display: flex;
    flex-direction: column;
    background: #bbdff9;
}
.scene {
    width: 100%;
    flex: 1;
    min-height: 0;
}
.scene [id^="rim"] path {
    vector-effect: non-scaling-stroke;
}
.edge {
    fill: none;
    stroke: #222;
    stroke-width: 1px;
}
.faint {
    opacity: .5;
}
.frame {
    fill: none;
    stroke: #eeb940;
    stroke-width: 2px;
}
.ring, .hub {
    vector-effect: non-scaling-stroke;
}
.dark {
    stroke: #4c4c4c;
}
.mid {
    stroke: #707070;
}
.glint {
    stroke: #8c8c8c;
}
.ring.dark {
    stroke-width: 6px;
}
.ring.mid {
    stroke-width: 4px;
}
.ring.glint {
    stroke-width: 2px;
}
.hub.dark {
    stroke-width: 15px;
}
.hub.mid {
    stroke-width: 12px;
}
.hub.light {
    stroke-width: 6px;
    stroke: #818181;
}
.axis, .wcs, .dims, .nav-axis, .ruler {
    font-family: "Liberation Sans", Arial, sans-serif;
}
.axis {
    font-size: 14px;
}
.wcs {
    font-size: 14px;
    fill: #1c2860;
}
.dims {
    font-size: 16px;
}
.dims rect {
    fill: #fff;
    stroke: #111;
}
.face {
    font-size: 12px;
    font-weight: bold;
    fill: #777;
    text-anchor: middle;
}
.nav-axis {
    font-size: 16px;
}
.ruler {
    width: 100%;
    font-size: 16px;
    background: linear-gradient(#edf6fe, #bbdff9);
    border-top: 1px solid #4a5c70;
}
.ruler path {
    fill: none;
    stroke: #44505c;
}
.dock {
    width: 395px;
    background: #fff;
}
.pane {
    height: 57px;
    border-bottom: 1px solid #999;
    display: flex;
    flex-direction: column;
    justify-content: space-between;
    align-items: flex-end;
}
.x {
    width: 30px;
    line-height: 28px;
    font-size: 15px;
    font-weight: bold;
    color: #111;
}
.scroll {
    display: flex;
    height: 25px;
    border: 1px solid #aaa;
    border-bottom: 0;
    width: 100%;
    justify-content: flex-end;
}
.scroll i {
    width: 20px;
    border-right: 1px solid #aaa;
    display: flex;
    align-items: center;
    justify-content: center;
}
.scroll i::after {
    content: '';
    border: 7px solid transparent;
}
.scroll .left::after {
    border-right-color: #888;
    border-left: 0;
}
.scroll .right::after {
    border-left-color: #111;
    border-right: 0;
}

/* Bottom bars */
.toolbar {
    height: 34px;
    flex: none;
    display: flex;
    align-items: center;
}
.toolbar .grip {
    width: 2px;
    height: 22px;
    margin: 0 5px 0 4px;
    background: repeating-linear-gradient(#222 0 2px, transparent 2px 4px);
}
.toolbar button {
    width: 31px;
    height: 30px;
    display: flex;
    align-items: center;
    justify-content: center;
}
.toolbar button svg {
    width: 24px;
    height: 24px;
}
.toolbar .on {
    background: #a5cdee;
}
.lit {
    background: #d3e7f8;
    height: 30px;
    display: flex;
    align-items: center;
}
.grey {
    color: #999;
}
.blue {
    color: #2a9ae0;
}
.status {
    height: 20px;
    flex: none;
    background: #2b97f8;
    border-top: 1px solid #4a9ad8;
    color: #10305c;
    padding-left: 6px;
    line-height: 24px;
}
.taskbar {
    height: 3px;
    flex: none;
    background: #0b4a86;
}
.taskbar i {
    display: block;
    width: 360px;
    height: 3px;
    margin-left: 60px;
    background: #8fd0fb;
}

/* Fix wizard window, floats over the viewport */
.dialog {
    position: absolute;
    top: 148px;
    right: 29px;
    width: 771px;
    height: 712px;
    display: flex;
    flex-direction: column;
    background: #f0f0f0;
    border: 1px solid #9a9a9a;
    box-shadow: 2px 3px 10px rgba(0, 0, 0, 0.4);
    color: #111;
}
.dlg-title {
    height: 37px;
    flex: none;
    background: #fff;
    display: flex;
    align-items: center;
    gap: 6px;
    padding: 0 23px 0 10px;
}
.dlg-title > svg {
    width: 18px;
    height: 18px;
}
.dlg-title h2 {
    font-size: 14px;
    color: #999;
    flex: 1;
}
.dlg-controls {
    display: flex;
    gap: 45px;
}
.dlg-controls svg {
    width: 14px;
    height: 14px;
}
.dlg-body {
    flex: 1;
    min-height: 0;
    display: flex;
    padding: 5px 6px 4px 5px;
}
.pages {
    width: 152px;
    flex: none;
    background: #fff;
    border: 2px solid #777;
    border-right-color: #999;
    padding: 2px 7px 0 1px;
    list-style: none;
    font-size: 14px;
}
.pages li {
    height: 24px;
    display: flex;
    align-items: center;
    gap: 1px;
    padding-left: 3px;
}
.pages svg {
    width: 20px;
    height: 20px;
}
.pages span {
    line-height: 24px;
    padding-left: 2px;
    flex: 1;
}
.pages .current span {
    background: #f0f0f0;
}
.pages .line {
    padding: 0;
}
.pages .line::after {
    content: '';
    flex: 1;
    height: 1px;
    background: #666;
}
.content {
    flex: 1;
    display: flex;
    flex-direction: column;
    padding-left: 9px;
}
.part {
    display: flex;
    align-items: flex-start;
    padding-left: 8px;
    height: 40px;
}
.part label {
    width: 91px;
    line-height: 18px;
}
.select {
    flex: 1;
    position: relative;
}
.select select {
    appearance: none;
    width: 100%;
    height: 25px;
    border: 1px solid #a6a6a6;
    border-radius: 0;
    background: #e1e1e1;
    font: inherit;
    color: inherit;
    padding: 2px 4px 0;
}
.select svg {
    position: absolute;
    right: 6px;
    top: 9px;
    width: 10px;
    height: 6px;
}
.btn {
    width: 73px;
    height: 31px;
    border: 1px solid #a6a6a6;
    background: #e1e1e1;
}
.btn:disabled {
    background: #cbcbcb;
    border-color: #bcbcbc;
    color: #8c8c8c;
}
.next {
    width: 57px;
    height: 29px;
    margin: 1px 0 0 5px;
}
.sheet {
    height: 481px;
    margin-right: 4px;
    padding: 26px 12px 0;
    border: 1px solid #a0a0a0;
    border-radius: 4px;
    background: linear-gradient(#fff, #f0f0f0 85%);
}
fieldset {
    margin: 0;
    border: 1px solid #d9d9d9;
    padding: 0 12px;
}
legend {
    padding: 0 3px;
    margin-left: -6px;
    line-height: 16px;
}
.advice {
    height: 94px;
    display: flex;
    padding-left: 15px;
}
.advice p {
    flex: 1;
    line-height: 17px;
    padding: 10px 10px 0 0;
}
.vscroll {
    width: 20px;
    height: 57px;
    margin-top: 10px;
    background: #f0f0f0;
    display: flex;
    flex-direction: column;
    justify-content: space-between;
    align-items: center;
    padding: 7px 0;
}
.vscroll svg {
    width: 10px;
    height: 6px;
}
.diag {
    height: 340px;
    margin-top: 6px;
    display: flex;
    flex-direction: column;
}
.full {
    display: flex;
    align-items: center;
    gap: 3px;
    height: 24px;
    margin: 8px 0 12px;
}
input[type="checkbox"] {
    appearance: none;
    width: 16px;
    height: 16px;
    margin: 0;
    border: 1px solid #333;
    background: #fff;
    display: flex;
    justify-content: center;
}
input[type="checkbox"]:checked::after {
    content: '';
    width: 5px;
    height: 9px;
    border: solid #333;
    border-width: 0 1px 1px 0;
    margin-top: 1px;
    transform: rotate(42deg);
}
.check {
    height: 25px;
    display: grid;
    grid-template-columns: 25px 25px 56px 1fr;
    align-items: center;
    padding-left: 25px;
}
.check.sub {
    padding-left: 50px;
}
.check svg {
    width: 17px;
    height: 17px;
}
.check b {
    color: #000;
}
.dot {
    width: 3px;
    height: 3px;
    margin-left: 7px;
    background: #2c3cb0;
}
.update {
    width: 139px;
    height: 30px;
    margin-top: 12px;
    align-self: flex-end;
}
.update, .follow {
    display: flex;
    align-items: center;
    padding: 0 3px;
}
.update svg, .follow svg {
    width: 20px;
    height: 20px;
}
.update span, .follow span {
    flex: 1;
    padding-right: 6px;
}
.actions {
    margin-top: auto;
    display: flex;
    justify-content: flex-end;
    gap: 8px;
    padding-right: 19px;
    margin-bottom: 1px;
}
.follow {
    width: 189px;
}
.follow span {
    text-shadow: 1px 1px 0 #fff;
    color: #b4b4b4;
}
.resize {
    position: absolute;
    right: 0;
    bottom: 0;
    width: 14px;
    height: 14px;
}
```

FILE: scene.js
```javascript
const NS = 'http://www.w3.org/2000/svg';

function add(parent, tag, attrs, text) {
    const el = document.createElementNS(NS, tag);
    for (const key in attrs) el.setAttribute(key, attrs[key]);
    if (text !== undefined) el.textContent = text;
    parent.appendChild(el);
    return el;
}

// Closed curve through the points
function smooth(p) {
    const n = p.length;
    const k = 8;
    let d = 'M' + p[0];
    for (let i = 0; i < n; i++) {
        const a = p[(i + n - 1) % n], b = p[i], c = p[(i + 1) % n], e = p[(i + 2) % n];
        d += 'C' + [b[0] + (c[0] - a[0]) / k, b[1] + (c[1] - a[1]) / k,
            c[0] - (e[0] - b[0]) / k, c[1] - (e[1] - b[1]) / k, c[0], c[1]].join(' ');
    }
    return d + 'Z';
}

function pairs(s) {
    return s.split(' ').map(p => p.split(',').map(Number));
}

// Ruler: 108px per centimetre
const ruler = document.getElementById('ruler');
let ticks = '';
for (let i = 0; i <= 136; i++) {
    const x = Math.round(i * 10.8) - 0.5;
    ticks += `M${Math.max(x, 0.5)} 0V${i % 10 === 0 ? 13 : i % 5 === 0 ? 8 : 4}`;
}
add(ruler, 'path', { d: ticks });
for (let i = 0; i <= 13; i++) {
    add(ruler, 'text', { x: i ? i * 108 - 2 : 7, y: 32, 'text-anchor': 'middle' }, i);
}
add(ruler, 'text', { x: 1501, y: 29, 'text-anchor': 'middle' }, 'cm');

// Spokes: hub to ring, then two branches to the rim
const spokes = document.getElementById('spokes');
[
    ['M776 437Q776 390 787 347', 7], ['M778 436Q812 410 814 365', 6], ['M776 437 747 543', 8],
    ['M854 447Q875 395 906 353', 7], ['M854 447Q925 415 937 388', 7], ['M854 447 772 548', 8],
    ['M886 515 952 502', 8], ['M886 515Q912 480 922 470 932 462 956 460', 7], ['M886 515 779 568', 8],
    ['M855 608 896 623', 7], ['M855 608Q880 598 892 600L922 610', 8], ['M855 608 772 598', 9],
    ['M779 697 805 737', 7], ['M779 697Q777 730 790 745', 8], ['M779 697 747 626', 8],
    ['M684 747 682 805', 8], ['M684 747Q655 783 649 795 646 805 647 825', 8], ['M684 747 716 642', 8],
    ['M606 738Q588 785 565 826', 7], ['M606 738Q555 765 536 778 525 787 519 803', 8], ['M606 738 690 642', 8],
    ['M573 673Q510 685 497 690 487 695 480 706', 8], ['M573 673Q548 708 536 720 525 728 504 730', 8], ['M573 673 678 622', 8],
    ['M601 578 551 558Q540 553 523 558', 8], ['M601 578Q580 592 571 592 560 592 549 582', 8], ['M601 578 687 589', 9],
    ['M679 487 635 408', 8], ['M681 484Q686 460 670 440', 8], ['M679 487 713 557', 8]
].forEach(([d, w]) => {
    add(spokes, 'path', { d, fill: 'none', stroke: '#4a4a4a', 'stroke-width': w });
    add(spokes, 'path', { d, fill: 'none', stroke: '#717171', 'stroke-width': w - 2 });
    add(spokes, 'path', { d, fill: 'none', stroke: '#8e8e8e', 'stroke-width': w - 5 });
});
add(spokes, 'circle', { cx: 684, cy: 747, r: 8, fill: '#828282', stroke: '#555' });

const rimTop = document.getElementById('rimTop');
const rimBottom = document.getElementById('rimBottom');

function segment(g, pts, fill) {
    add(g, 'path', { d: smooth(pairs(pts)), fill: fill[0] === '#' ? fill : `url(#${fill})`, stroke: '#383838' });
}
function crease(g, d) {
    add(g, 'path', { d, fill: 'none', stroke: '#2c2c2c' });
}
function sheen(g, d, color, w) {
    add(g, 'path', { d, fill: 'none', stroke: color, 'stroke-width': w, 'stroke-linecap': 'round', 'stroke-opacity': .5 });
}
// Hexagonal window; open ones show a bright lattice behind
function hex(g, x, y, s, open) {
    const pts = [[-.3, -1], [.6, -.9], [1, 0], [.4, .95], [-.6, .9], [-1, 0]]
        .map(p => [x + p[0] * 30 * s, y + p[1] * 34 * s]);
    add(g, 'path', { d: 'M' + pts.join('L') + 'Z', fill: open ? '#454c52' : '#585858', stroke: '#303030' });
    if (open) {
        add(g, 'path', {
            d: `M${x - 18 * s} ${y - 16 * s}l${34 * s} ${34 * s}M${x + 16 * s} ${y - 20 * s}l${-30 * s} ${42 * s}M${x - 4 * s} ${y - 28 * s}v${54 * s}M${x - 22 * s} ${y + 4 * s}h${42 * s}`,
            stroke: '#a3b1bb', fill: 'none', 'stroke-width': 1
        });
    } else {
        const inner = pts.map(p => [x - 3 * s + (p[0] - x) * .82, y - 3 * s + (p[1] - y) * .82]);
        add(g, 'path', { d: 'M' + inner.join('L') + 'Z', fill: '#878787' });
    }
}

// Upper half of the rim
segment(rimTop, '700,385 720,370 930,312 1070,368 1120,430 1060,395 980,408 900,402 820,422 770,465 745,470 720,440', 'band');
[[745, 412], [805, 388], [862, 374], [918, 362], [970, 364], [1020, 372]].forEach((p, i) => hex(rimTop, p[0], p[1], .8, i > 0));
segment(rimTop, '688,395 690,340 712,305 745,316 810,322 885,285 930,305 900,340 800,362', 'boneV');
segment(rimTop, '702,345 715,308 745,318 820,320 780,338', 'lattice');
segment(rimTop, '885,300 895,255 930,238 955,245 950,300 925,328', 'bone');
segment(rimTop, '925,300 945,250 985,238 1015,252 1050,305 1095,320 1080,372 1060,370 1000,340', 'boneV');
crease(rimTop, 'M885 298Q930 300 1075 352');
segment(rimTop, '1075,360 1095,318 1145,304 1185,330 1195,350 1120,360 1100,405', 'boneV');
segment(rimTop, '1098,400 1110,360 1150,340 1195,350 1220,390 1218,450 1228,490 1262,525 1205,535 1175,545 1165,480 1140,440', 'lattice');
segment(rimTop, '1188,600 1240,575 1300,600 1312,650 1292,700 1276,770 1274,850 1290,900 1200,905 1175,880 1192,800 1192,700', 'bone');
segment(rimTop, '1175,595 1172,550 1220,520 1280,532 1302,590 1298,605 1240,573 1195,590 1180,610', 'boneV');
segment(rimTop, '1155,905 1200,890 1275,880 1295,910 1290,945 1270,955 1225,915', 'boneV');

segment(rimTop, '440,518 520,500 590,430 645,342 685,342 690,400 742,480 725,497 650,512 590,570 530,665 495,640 455,600 430,560', 'band');
segment(rimTop, '640,370 655,338 685,345 690,400 655,410', 'boneV');
segment(rimTop, '440,518 520,500 590,430 645,350 648,400 590,470 520,515 460,545', '#666');
sheen(rimTop, 'M475 545Q590 490 660 410', '#a8a8a8', 3);
[[680, 450], [618, 497], [558, 545], [505, 600]].forEach(p => hex(rimTop, p[0], p[1], 1));
segment(rimTop, '390,575 435,580 492,645 495,700 430,760 360,860 325,950 300,965 215,865 210,832 240,820 330,700 372,620', 'band');
segment(rimTop, '390,575 425,585 390,640 340,730 270,820 225,850 210,832 240,820 330,700 372,620', '#4c4c4c');
[[438, 670], [388, 740], [337, 812], [290, 887]].forEach(p => hex(rimTop, p[0], p[1], 1, true));
sheen(rimTop, 'M240 860Q350 750 415 620', '#999', 3);
// spoke that runs over the band up to the box edge
add(rimTop, 'path', { d: 'M450 540 550 770', fill: 'none', stroke: '#444', 'stroke-width': 9 });
add(rimTop, 'path', { d: 'M450 540 550 770', fill: 'none', stroke: '#6e6e6e', 'stroke-width': 6 });

// Lower half of the rim
segment(rimBottom, '380,90 440,80 500,155 495,200 440,290 400,400 398,475 385,487 330,440 272,405 272,372 325,325 365,235 385,150', 'band');
segment(rimBottom, '380,92 420,85 410,170 380,290 325,390 275,400 272,372 325,325 365,235 385,150', '#606060');
[[450, 150], [418, 238], [388, 318], [365, 400]].forEach(p => hex(rimBottom, p[0], p[1], .95));
add(rimBottom, 'path', { d: 'M400 175Q430 160 460 178L580 235', fill: 'none', stroke: '#444', 'stroke-width': 9 });
add(rimBottom, 'path', { d: 'M400 175Q430 160 460 178L580 235', fill: 'none', stroke: '#7a7a7a', 'stroke-width': 6 });
segment(rimBottom, '268,400 275,368 305,358 335,375 325,410 290,440', 'bone');
segment(rimBottom, '252,475 260,430 310,410 350,430 384,485 380,540 355,600 350,690 370,780 388,890 350,870 285,700 270,600 268,540', 'band');
segment(rimBottom, '255,475 268,435 295,430 310,520 298,620 283,690 270,590', 'lattice');
sheen(rimBottom, 'M318 430Q310 560 290 670', '#a5a5a5', 5);
[[347, 500, .8], [330, 570, .7, true], [328, 640, .7, true], [332, 705, .7], [342, 770, .6], [358, 835, .5]].forEach(p => hex(rimBottom, ...p));
add(rimBottom, 'path', { d: 'M300 615Q310 580 345 568L510 523', fill: 'none', stroke: '#4a4a4a', 'stroke-width': 8 });
add(rimBottom, 'path', { d: 'M300 615Q310 580 345 568L510 523', fill: 'none', stroke: '#848484', 'stroke-width': 5 });
segment(rimBottom, '245,790 235,730 255,675 288,662 308,715 290,720 262,760', 'bone');
segment(rimBottom, '245,800 262,735 290,705 312,720 345,800 388,900 372,905 340,915 325,900 265,845', 'boneV');
crease(rimBottom, 'M290 706Q320 810 378 900');
segment(rimBottom, '340,1030 325,970 335,905 360,880 388,905 365,950 360,1040', 'bone');
segment(rimBottom, '360,1045 362,960 388,908 440,940 520,975 515,1078 455,1068 400,1075', 'lattice');
segment(rimBottom, '515,1070 520,985 540,968 575,975 560,1020 565,1090 600,1135 570,1140 540,1118', 'bone');
segment(rimBottom, '562,1050 572,978 600,968 680,970 745,938 775,925 800,1000 800,1062 740,1062 690,1072 655,1105 640,1132 615,1140 590,1125', 'boneV');
segment(rimBottom, '765,935 775,908 805,908 815,960 855,1040 850,1070 825,1076 785,1040', 'bone');
segment(rimBottom, '808,930 820,885 900,850 970,790 1018,722 1060,760 1108,860 1010,905 940,965 900,1040 880,1042 845,1010', 'lattice');
sheen(rimBottom, 'M808 925Q820 1000 888 1040', '#8a8a8a', 4);
segment(rimBottom, '1012,722 1045,708 1080,730 1118,800 1110,862 1070,830', 'bone');
segment(rimBottom, '1255,400 1262,362 1310,400 1375,478 1335,490 1290,460', 'bone');
segment(rimBottom, '1355,100 1420,92 1480,150 1484,190 1445,230 1405,330 1380,430 1375,475 1320,410 1265,372 1310,320 1345,230', 'lattice');
crease(rimBottom, 'M1358 98Q1440 100 1483 180');
segment(rimBottom, '1222,450 1230,420 1252,410 1310,450 1340,515 1336,548 1300,560 1250,610 1200,690 1165,770 1160,805 1130,805 1062,745 1050,700 1062,668 1100,655 1150,600 1200,520', 'bone');
crease(rimBottom, 'M1226 425Q1300 460 1338 548M1060 670Q1110 720 1160 805');
```
